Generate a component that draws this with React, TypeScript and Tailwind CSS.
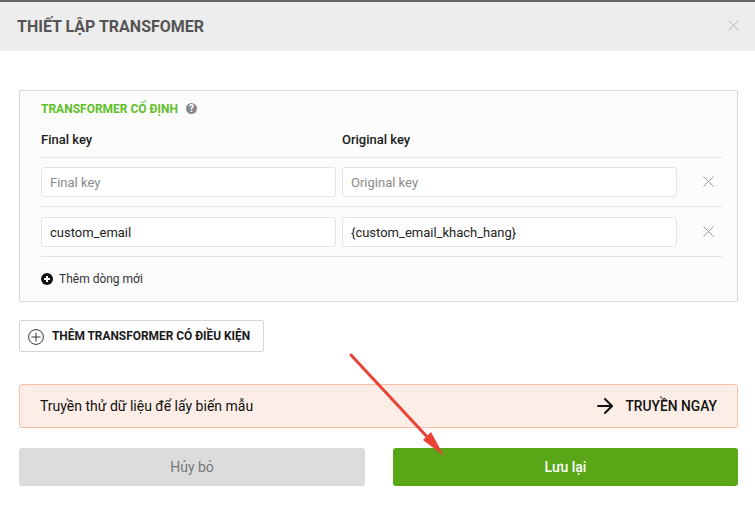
import { X, ArrowRight } from 'lucide-react';

const rows = [
  { key: '', original: '', height: 'h-[49px]' },
  { key: 'custom_email', original: '{custom_email_khach_hang}', height: 'h-[50px] pt-[1px]' },
];

export default function App() {
  return (
    <div className="relative h-[509px] w-[755px] overflow-hidden bg-white font-['Roboto',sans-serif]">
      {/* Header */}
      <div className="flex h-[51px] items-center justify-between border-t-2 border-[#666666] bg-[#ededed] pl-[17px] pr-[12px]">
        <h2 className="text-[16px] font-bold text-[#555555]">THIẾT LẬP TRANSFOMER</h2>
        <X className="h-[19px] w-[19px] -translate-y-[1px] text-[#b4b4b4]" strokeWidth={1.2} />
      </div>

      <div className="px-[17px] pl-[19px] pt-[39px]">
        {/* Fixed transformer */}
        <div className="h-[212px] w-[719px] rounded-[2px] border border-[#d6d6d6] bg-[#fcfcfc] pl-[21px] pr-[15px]">
          <div className="flex h-[35px] items-center gap-[8px]">
            <span className="text-[12px] font-bold text-[#5fbf2a]">TRANSFORMER CỐ ĐỊNH</span>
            <span className="flex h-[11px] w-[11px] items-center justify-center rounded-full bg-[#888888] text-[10px] font-bold text-white">?</span>
          </div>
          <div className="flex h-[32px] items-center border-b border-[#e4e4e4] pb-[4px] text-[13px] font-medium text-[#1a1a1a]">
            <span className="w-[301px]">Final key</span>
            <span>Original key</span>
          </div>
          {rows.map((row, i) => (
            <div key={i} className={`flex items-center border-b border-[#e4e4e4] ${row.height}`}>
              <input
                readOnly
                value={row.key}
                placeholder="Final key"
                className="h-[30px] w-[295px] rounded-[3px] border border-[#e4e4e4] bg-white px-[8px] pt-[1px] text-[13px] text-[#222222] outline-none placeholder:text-[#8a8a8a]"
              />
              <input
                readOnly
                value={row.original}
                placeholder="Original key"
                className="ml-[6px] h-[30px] w-[335px] rounded-[3px] border border-[#e4e4e4] bg-white px-[8px] pt-[1px] text-[13px] text-[#222222] outline-none placeholder:text-[#8a8a8a]"
              />
              <X className="ml-[22px] h-[19px] w-[19px] -translate-y-[1px] text-[#999999]" strokeWidth={1.2} />
            </div>
          ))}
          <div className="flex h-[44px] items-center gap-[6px]">
            <svg viewBox="0 0 12 12" className="h-[12px] w-[12px]">
              <circle cx="6" cy="6" r="6" fill="#111111" />
              <path d="M6 3v6M3 6h6" stroke="#ffffff" strokeWidth="2" />
            </svg>
            <span className="text-[12px] text-[#333333]">Thêm dòng mới</span>
          </div>
        </div>

        {/* Conditional transformer */}
        <button className="mt-[18px] flex h-[32px] w-[245px] items-center gap-[8px] rounded-[2px] border border-[#d6d6d6] bg-white pl-[8px] pt-[1px] text-[11.9px] font-bold text-[#1a1a1a]">
          <svg viewBox="0 0 16 16" className="h-[16px] w-[16px]" fill="none" stroke="#333333">
            <circle cx="8" cy="8" r="7.4" />
            <path d="M8 3.5v9M3.5 8h9" />
          </svg>
          THÊM TRANSFORMER CÓ ĐIỀU KIỆN
        </button>

        {/* Test banner */}
        <div className="mt-[32px] flex h-[44px] w-[719px] items-center justify-between rounded-[3px] border border-[#fbbfa5] bg-[#fcede6] pl-[20px] pr-[20px]">
          <span className="text-[14px] text-[#111111]">Truyền thử dữ liệu để lấy biến mẫu</span>
          <div className="flex items-center gap-[8px] text-[13.8px] font-medium text-[#111111]">
            <ArrowRight className="h-[24px] w-[24px]" strokeWidth={2} />
            TRUYỀN NGAY
          </div>
        </div>

        {/* Footer */}
        <div className="mt-[20px] flex w-[719px] justify-between">
          <button className="h-[38px] w-[346px] rounded-[3px] bg-[#dcdcdc] text-[14px] text-[#777777]">Hủy bỏ</button>
          <button className="h-[38px] w-[345px] rounded-[3px] bg-[#59a716] text-[14px] font-medium text-white">Lưu lại</button>
        </div>
      </div>

      {/* Annotation arrow */}
      <svg viewBox="0 0 755 509" className="pointer-events-none absolute inset-0 h-[509px] w-[755px]">
        <path d="M351 355 L431 441" stroke="#ea4335" strokeWidth="3" strokeLinecap="round" />
        <path d="M444 456 L423 440 L431 432 Z" fill="#ea4335" />
      </svg>
    </div>
  );
}
